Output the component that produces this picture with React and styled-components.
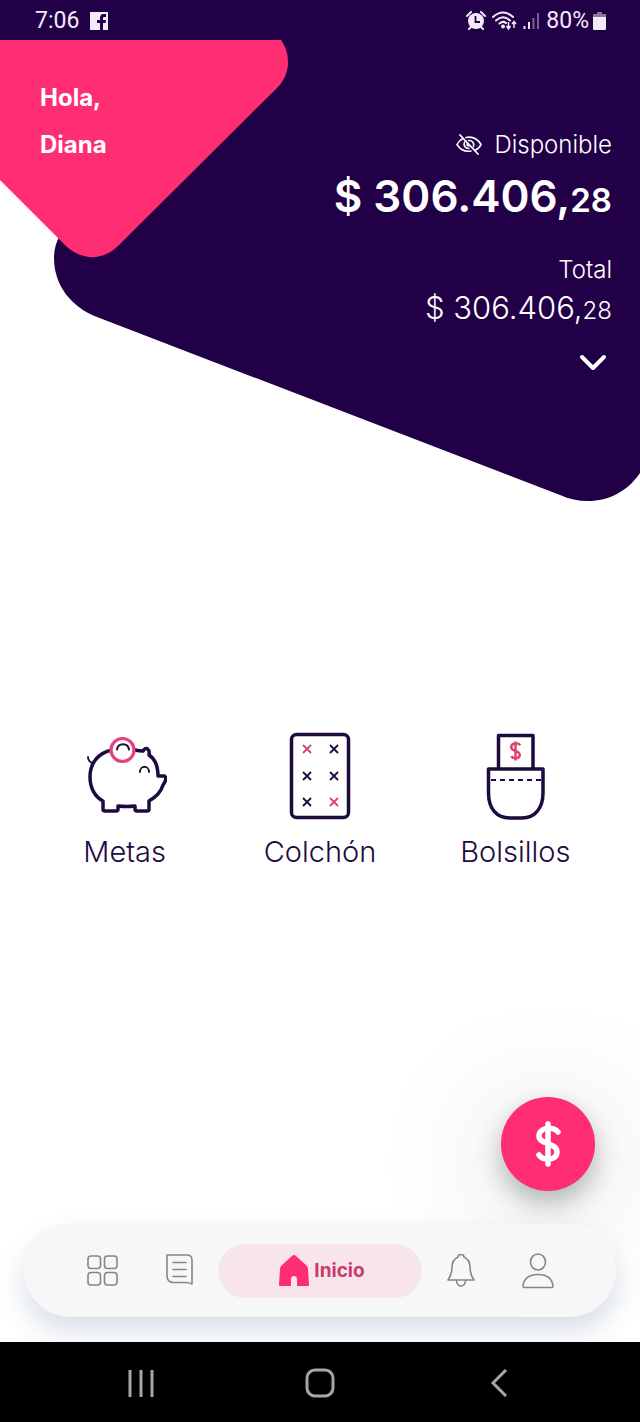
import React from "react";
import styled, { createGlobalStyle } from "styled-components";

const navy = "#220048";
const ink = "#1d0b3f";
const pink = "#ff2e72";

const GlobalStyle = createGlobalStyle`
  *, *::before, *::after { box-sizing: border-box; }
  body {
    margin: 0;
    background: #fff;
    color: ${ink};
    font-family: Inter, "Liberation Sans", sans-serif;
  }
  button { font: inherit; color: inherit; background: none; border: 0; padding: 0; cursor: pointer; }
  a { color: inherit; text-decoration: none; }
  p { margin: 0; }
  svg { display: block; }
`;

const Screen = styled.div`
  display: flex;
  flex-direction: column;
  min-height: 100vh;
  overflow: hidden;
`;

const Header = styled.header`
  display: grid;
  color: #fff;
  > * { grid-area: 1 / 1; }
`;

const Backdrop = styled.svg`
  width: 100%;
  height: auto;
`;

const HeaderContent = styled.div`
  z-index: 1;
  min-width: 0;
`;

const StatusBar = styled.div`
  display: flex;
  align-items: center;
  justify-content: space-between;
  height: 40px;
  padding: 1px 34px 0 35px;
  font: 400 23px/39px Roboto, sans-serif;
  color: #f3eaf8;
`;

const StatusGroup = styled.div`
  display: flex;
  align-items: center;
  gap: ${(p) => p.$gap}px;
`;

const Hero = styled.div`
  display: flex;
  justify-content: space-between;
  padding: 34px 28px 0 40px;
`;

const Greeting = styled.p`
  font-size: 24px;
  font-weight: 700;
  line-height: 47px;
`;

const Balance = styled.div`
  display: flex;
  flex-direction: column;
  align-items: flex-end;
  padding-top: 55px;
`;

const BalanceLabel = styled.div`
  display: flex;
  align-items: center;
  gap: 12px;
  font-size: 24px;
  font-weight: 300;
  line-height: 32px;
`;

const MainAmount = styled.p`
  font-size: 44px;
  font-weight: 600;
  line-height: 70px;
  margin-bottom: 19px;
  small { font-size: 33px; }
`;

const TotalAmount = styled.p`
  font-size: 31px;
  font-weight: 300;
  line-height: 44px;
  margin-bottom: 14px;
  small { font-size: 24px; }
`;

const ExpandButton = styled.button`
  display: grid;
  place-items: center;
  width: 38px;
  height: 32px;
`;

const Services = styled.main`
  flex: 1;
  display: grid;
  grid-template-columns: repeat(3, 1fr);
  align-items: center;
  padding: 4px 27px 0;
`;

const Service = styled.a`
  display: flex;
  flex-direction: column;
  align-items: center;
  gap: 12px;
  font-size: 29px;
  font-weight: 300;
  line-height: 40px;
`;

const ActionRow = styled.div`
  display: flex;
  justify-content: flex-end;
  padding: 0 45px 33px;
`;

const PayButton = styled.button`
  display: grid;
  place-items: center;
  width: 94px;
  height: 94px;
  border-radius: 50%;
  background: ${pink};
  color: #fff;
  box-shadow: 0 12px 26px rgba(0, 20, 10, 0.28), 0 20px 120px 30px rgba(0, 20, 10, 0.08);
`;

const TabBar = styled.nav`
  position: relative;
  display: flex;
  align-items: center;
  height: 93px;
  margin: 0 24px 25px;
  padding: 0 40px;
  border-radius: 47px;
  background: #f7f7f7;
  box-shadow: 0 14px 28px rgba(60, 90, 140, 0.2);
`;

const Tab = styled.a`
  display: flex;
  align-items: center;
  justify-content: center;
  flex: 0 1 77px;
  height: 54px;
  color: #868686;
`;

const ActiveTab = styled(Tab)`
  flex: 1 1 0;
  gap: 5px;
  padding-left: 4px;
  border-radius: 27px;
  background: #f8e5eb;
  color: #cc3a6d;
  font-size: 19px;
  font-weight: 700;
`;

const SystemBar = styled.div`
  position: relative;
  display: flex;
  align-items: center;
  justify-content: center;
  height: 80px;
  padding-top: 2px;
  background: #000;
  color: #a6a6a6;
`;

const SystemButton = styled.button`
  display: grid;
  place-items: center;
  flex: 0 1 179px;
  height: 78px;
`;

const dollarStroke = "M10 -12C6 -18 -9 -17 -9 -8C-9 1 9 -2 9 8C9 17 -5 17 -9 11M0 -20V20";

function HeaderShapes() {
  return (
    <Backdrop viewBox="0 0 640 502" aria-hidden="true">
      <path
        fill={navy}
        d="M0 0H640V473C628 491 609 501 588 501C578 501 569 499 560 495L97 317C71 307 54 285 54 258C54 250 56 243 59 237L100 100L0 60Z"
      />
      <path
        fill={pink}
        d="M0 40H281C286 47 288 54 288 62C288 72 284 81 277 88L119 245C104 261 82 261 66 246L0 180Z"
      />
    </Backdrop>
  );
}

function FacebookIcon() {
  return (
    <svg width="18" height="18" viewBox="0 0 18 18" aria-hidden="true">
      <path fill="currentColor" d="M0 0H18V18H13V11H15.500L16 8H13V6Q13 5 14.500 5H16V2H13.500Q10 2 10 6V8H7V11H10V18H0Z" />
    </svg>
  );
}

function AlarmIcon() {
  return (
    <svg width="20" height="20" viewBox="0 0 20 20" aria-hidden="true">
      <circle cx="10" cy="10" r="8" fill="currentColor" />
      <path d="M1 5L5 1M19 5L15 1M5 16L3 18M15 16L17 18" stroke="currentColor" strokeWidth="2" strokeLinecap="round" />
      <path d="M9.500 5V11H14" fill="none" stroke={navy} strokeWidth="1.800" />
    </svg>
  );
}

function WifiIcon() {
  return (
    <svg width="25" height="20" viewBox="0 0 25 20" aria-hidden="true">
      <g fill="none" stroke="currentColor" strokeWidth="2" strokeLinecap="round">
        <path d="M1 6Q11 -3 21 6M4 9.500Q11 3 18 9.500M7.500 12.500Q11 9.500 14 12" />
      </g>
      <circle cx="11" cy="15.500" r="2" fill="currentColor" />
      <path d="M16.500 11V17M14.500 15L16.500 18L18.500 15M22 17V11M20 13L22 10.500L24 13" fill="none" stroke="currentColor" strokeWidth="1.500" />
    </svg>
  );
}

function SignalIcon() {
  return (
    <svg width="17" height="18" viewBox="0 0 17 18" aria-hidden="true">
      <path d="M1.500 14V17M6 10V17" stroke="currentColor" strokeWidth="2" />
      <path d="M10.500 6V17M15 1V17" stroke="#79618f" strokeWidth="2" />
    </svg>
  );
}

function BatteryIcon() {
  return (
    <svg width="13" height="18" viewBox="0 0 13 18" aria-hidden="true">
      <path fill="#8c789e" d="M4 0H9V2H13V6H0V2H4Z" />
      <path fill="currentColor" d="M0 5H13V17Q13 18 12 18H1Q0 18 0 17Z" />
    </svg>
  );
}

function HiddenEyeIcon() {
  return (
    <svg width="26" height="22" viewBox="0 0 26 22" fill="none" stroke="currentColor" strokeWidth="1.600" strokeLinecap="round" aria-hidden="true">
      <path d="M7 4.500C4 6 2 8.500 1 10.500C4 15.500 9 18 15 17M10 3.500C17 2 22 5.500 25 10.500C24 13 22 15 19.500 16" />
      <path d="M8.500 8C7 12 9.500 14.500 13 14.500M12.500 6.500C16 6 18.500 9 17.500 12.500M11 10C11 11 12 12 13 12" />
      <path d="M4 1L22 20" strokeWidth="1.800" />
    </svg>
  );
}

function PiggyIcon() {
  return (
    <svg width="84" height="88" viewBox="0 0 84 88" fill="none" strokeLinecap="round" strokeLinejoin="round" aria-hidden="true">
      <path
        stroke={ink}
        strokeWidth="3.500"
        d="M29 18C15 21 7 31 7 45C7 56 12 65 20 69V77Q20 79 22 79H33Q35 79 35 77V74Q44 75 52 74V77Q52 79 54 79H64Q66 79 66 77V69C73 65 78 60 80 53C83 49 84 45 81 44H75C75 35 72 27 66 23C67 17 63 14 60 19Q56 19 52 18"
      />
      <path stroke={ink} strokeWidth="1.800" d="M9 31C7 30 5 28 5 25M57 40C57 33 66 33 66 40" />
      <circle cx="39.500" cy="18" r="11.500" fill="#fff" stroke="#e6417a" strokeWidth="3.200" />
      <path stroke={ink} strokeWidth="2" d="M34 17.500C35 10.500 45 10.500 46 17.500" />
    </svg>
  );
}

function Cross({ x, y, color = ink }) {
  return <path d={`M${x - 4} ${y - 4}l8 8m0 -8l-8 8`} stroke={color} strokeWidth="1.800" />;
}

function MattressIcon() {
  return (
    <svg width="62" height="88" viewBox="0 0 62 88" fill="none" aria-hidden="true">
      <rect x="2.500" y="2.500" width="57" height="83" rx="5" stroke={ink} strokeWidth="3.500" />
      <Cross x={18} y={17} color="#d94475" />
      <Cross x={45} y={17} />
      <Cross x={18} y={44} />
      <Cross x={45} y={44} />
      <Cross x={18} y={70} />
      <Cross x={45} y={70} color="#d94475" />
    </svg>
  );
}

function PocketIcon() {
  return (
    <svg width="60" height="88" viewBox="0 0 60 88" fill="none" strokeLinejoin="round" aria-hidden="true">
      <path d="M13.500 37V3.500H48V37" stroke={ink} strokeWidth="3.500" />
      <path d="M3.500 37H58V61C58 76 50 86 37 86H25C11 86 3.500 76 3.500 61Z" stroke={ink} strokeWidth="3.500" />
      <path d="M6 48H57" stroke={ink} strokeWidth="1.800" strokeDasharray="5 4" />
      <path d={dollarStroke} transform="translate(30.500 19) scale(0.480)" stroke="#e0406f" strokeWidth="5" />
    </svg>
  );
}

function DollarIcon() {
  return (
    <svg width="48" height="48" viewBox="-24 -24 48 48" fill="none" stroke="currentColor" strokeWidth="5.500" strokeLinecap="round" aria-hidden="true">
      <path d={dollarStroke} />
    </svg>
  );
}

function GridIcon() {
  return (
    <svg width="32" height="32" viewBox="0 0 32 32" fill="none" stroke="currentColor" strokeWidth="1.600" aria-hidden="true">
      <rect x="1" y="1" width="12.500" height="12.500" rx="3" />
      <rect x="17.500" y="1" width="12.500" height="12.500" rx="3" />
      <rect x="1" y="17.500" width="12.500" height="12.500" rx="3" />
      <rect x="17.500" y="17.500" width="12.500" height="12.500" rx="3" />
    </svg>
  );
}

function DocumentIcon() {
  return (
    <svg width="28" height="34" viewBox="0 0 28 34" fill="none" stroke="currentColor" strokeWidth="1.600" strokeLinejoin="round" aria-hidden="true">
      <path d="M1 1H21Q26 1 26 6V30Q23 28.500 20 28.500H8Q1 28.500 1 22Z" />
      <path d="M7 8.500H20M7 15.500H20M7 22.500H20" strokeLinecap="round" />
    </svg>
  );
}

function HomeIcon() {
  return (
    <svg width="30" height="34" viewBox="0 0 30 34" aria-hidden="true">
      <path fill={pink} d="M13 2Q15 0 17 2L27 11Q29 13 29 15L30 31Q30 32 29 32H18V25C18 21 12 21 12 25V32H1Q0 32 0 31L1 15Q1 13 3 11Z" />
    </svg>
  );
}

function BellIcon() {
  return (
    <svg width="28" height="34" viewBox="0 0 28 34" fill="none" stroke="currentColor" strokeWidth="1.600" strokeLinejoin="round" aria-hidden="true">
      <path d="M11 3C11 -0.500 17 -0.500 17 3C21 5 23 8 23 13C23 19 24 22 27 26H1C4 22 5 19 5 13C5 8 7 5 11 3Z" />
      <path d="M9.500 26C9.500 34 18.500 34 18.500 26" />
    </svg>
  );
}

function PersonIcon() {
  return (
    <svg width="32" height="36" viewBox="0 0 32 36" fill="none" stroke="currentColor" strokeWidth="1.600" strokeLinejoin="round" aria-hidden="true">
      <ellipse cx="16" cy="9" rx="7.500" ry="8" />
      <path d="M2 34.500Q1 34.500 1 33C2 25 8 21.500 16 21.500C24 21.500 30 25 31 33Q31 34.500 30 34.500Z" />
    </svg>
  );
}

const services = [
  { name: "Metas", Icon: PiggyIcon },
  { name: "Colchón", Icon: MattressIcon },
  { name: "Bolsillos", Icon: PocketIcon },
];

export default function App() {
  return (
    <Screen>
      <GlobalStyle />
      <Header>
        <HeaderShapes />
        <HeaderContent>
          <StatusBar>
            <StatusGroup $gap={11}>
              <span>7:06</span>
              <FacebookIcon />
            </StatusGroup>
            <StatusGroup $gap={4}>
              <StatusGroup $gap={6}>
                <AlarmIcon />
                <WifiIcon />
                <SignalIcon />
                <span>80%</span>
              </StatusGroup>
              <BatteryIcon />
            </StatusGroup>
          </StatusBar>
          <Hero>
            <div>
              <Greeting>Hola,</Greeting>
              <Greeting>Diana</Greeting>
            </div>
            <Balance>
              <BalanceLabel>
                <button type="button" aria-label="Ocultar saldo">
                  <HiddenEyeIcon />
                </button>
                <span>Disponible</span>
              </BalanceLabel>
              <MainAmount>
                $ 306.406,<small>28</small>
              </MainAmount>
              <BalanceLabel>Total</BalanceLabel>
              <TotalAmount>
                $ 306.406,<small>28</small>
              </TotalAmount>
              <ExpandButton type="button" aria-label="Ver detalle">
                <svg width="28" height="18" viewBox="0 0 28 18" fill="none" stroke="currentColor" strokeWidth="4" strokeLinecap="round" strokeLinejoin="round">
                  <path d="M3 3L14 14L25 3" />
                </svg>
              </ExpandButton>
            </Balance>
          </Hero>
        </HeaderContent>
      </Header>

      <Services>
        {services.map(({ name, Icon }) => (
          <Service key={name} href="#">
            <Icon />
            <span>{name}</span>
          </Service>
        ))}
      </Services>

      <ActionRow>
        <PayButton type="button" aria-label="Mover plata">
          <DollarIcon />
        </PayButton>
      </ActionRow>

      <TabBar>
        <Tab href="#" aria-label="Servicios"><GridIcon /></Tab>
        <Tab href="#" aria-label="Movimientos"><DocumentIcon /></Tab>
        <ActiveTab href="#" aria-current="page">
          <HomeIcon />
          <span>Inicio</span>
        </ActiveTab>
        <Tab href="#" aria-label="Notificaciones"><BellIcon /></Tab>
        <Tab href="#" aria-label="Perfil"><PersonIcon /></Tab>
      </TabBar>

      <SystemBar>
        <SystemButton type="button" aria-label="Recientes">
          <svg width="28" height="28" viewBox="0 0 28 28" stroke="currentColor" strokeWidth="3">
            <path d="M3 1V28M14 1V28M25 1V28" />
          </svg>
        </SystemButton>
        <SystemButton type="button" aria-label="Inicio del sistema">
          <svg width="30" height="30" viewBox="0 0 30 30" fill="none" stroke="currentColor" strokeWidth="3">
            <rect x="2" y="2" width="26" height="26" rx="8" />
          </svg>
        </SystemButton>
        <SystemButton type="button" aria-label="Atrás">
          <svg width="18" height="28" viewBox="0 0 18 28" fill="none" stroke="currentColor" strokeWidth="3">
            <path d="M16 1L3 14L16 27" />
          </svg>
        </SystemButton>
      </SystemBar>
    </Screen>
  );
}
